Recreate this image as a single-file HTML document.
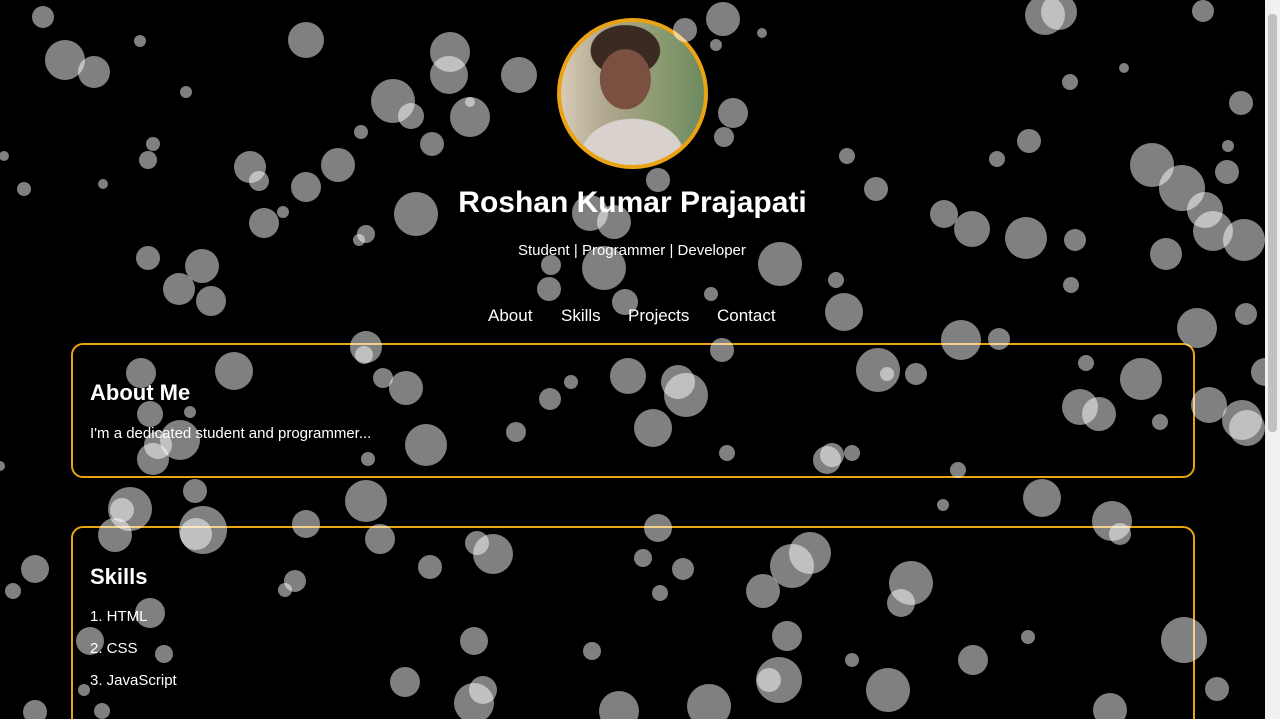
<!DOCTYPE html>
<html style="overflow:hidden;height:719px"><head><style>
body{margin:0;width:1280px;height:719px;overflow:hidden;background:#000;font-family:"Liberation Sans",sans-serif;color:#fff;position:relative}
.b{position:absolute;border-radius:50%;background:rgba(255,255,255,.5)}
.sb{position:absolute;right:0;top:0;width:15px;height:719px;background:#f1f1f1;z-index:5}
.sb i{position:absolute;left:3px;top:14px;width:9px;height:418px;background:#c1c1c1;border-radius:4px}
.av{position:absolute;left:557px;top:18px;width:143px;height:143px;border:4px solid #e9a314;border-radius:50%;background:radial-gradient(ellipse 22% 26% at 45% 40%,#7a5040 0 80%,transparent 82%),radial-gradient(ellipse 30% 22% at 45% 20%,#3a2a22 0 80%,transparent 82%),radial-gradient(ellipse 40% 30% at 50% 95%,#d9d2cc 0 90%,transparent 92%),linear-gradient(90deg,#d8cbb8,#b0a890 30%,#8a9a70 70%,#6f8a60);overflow:hidden}
.card{position:absolute;left:71px;width:1120px;border:2px solid #e9a314;border-radius:12px}
h1{position:absolute;top:186px;left:0;width:1265px;text-align:center;font-size:30px;margin:0;font-weight:bold}
.t{position:absolute;white-space:nowrap}
</style></head><body>
<div class="sb"><i></i></div>
<div class="av"></div>
<h1>Roshan Kumar Prajapati</h1>
<div class="t" style="left:518px;top:242px;font-size:15px">Student | Programmer | Developer</div>
<div class="t" style="left:488px;top:306px;font-size:17px">About</div>
<div class="t" style="left:561px;top:306px;font-size:17px">Skills</div>
<div class="t" style="left:628px;top:306px;font-size:17px">Projects</div>
<div class="t" style="left:717px;top:306px;font-size:17px">Contact</div>
<div class="card" style="top:343px;height:131px"></div>
<div class="t" style="left:90px;top:380px;font-size:22px;font-weight:bold">About Me</div>
<div class="t" style="left:90px;top:425px;font-size:15px">I'm a dedicated student and programmer...</div>
<div class="card" style="top:526px;height:220px"></div>
<div class="t" style="left:90px;top:564px;font-size:22px;font-weight:bold">Skills</div>
<div class="t" style="left:90px;top:608px;font-size:15px">1. HTML</div>
<div class="t" style="left:90px;top:640px;font-size:15px">2. CSS</div>
<div class="t" style="left:90px;top:672px;font-size:15px">3. JavaScript</div>
<div id="bb"></div>
<script>
var d=[[65,60,20],[94,72,16],[43,17,11],[140,41,6],[186,92,6],[306,40,18],[393,101,22],[411,116,13],[450,52,20],[449,75,19],[470,117,20],[519,75,18],[432,144,12],[361,132,7],[338,165,17],[306,187,15],[250,167,16],[259,181,10],[283,212,6],[264,223,15],[416,214,22],[366,234,9],[359,240,6],[148,160,9],[153,144,7],[103,184,5],[24,189,7],[4,156,5],[148,258,12],[202,266,17],[179,289,16],[211,301,15],[549,289,12],[551,265,10],[590,213,18],[614,222,17],[604,268,22],[625,302,13],[658,180,12],[685,30,12],[723,19,17],[733,113,15],[716,45,6],[762,33,5],[724,137,10],[780,264,22],[836,280,8],[844,312,19],[847,156,8],[876,189,12],[711,294,7],[722,350,12],[686,395,22],[678,382,17],[628,376,18],[653,428,19],[571,382,7],[550,399,11],[516,432,10],[470,102,5],[1045,15,20],[1059,12,18],[1070,82,8],[1124,68,5],[1203,11,11],[1241,103,12],[1227,172,12],[1228,146,6],[1152,165,22],[1182,188,23],[1205,210,18],[1213,231,20],[1244,240,21],[1166,254,16],[1075,240,11],[1026,238,21],[972,229,18],[944,214,14],[997,159,8],[1029,141,12],[1071,285,8],[1197,328,20],[1246,314,11],[961,340,20],[999,339,11],[878,370,22],[887,374,7],[916,374,11],[1086,363,8],[1141,379,21],[1080,407,18],[1099,414,17],[1160,422,8],[1209,405,18],[1242,420,20],[1247,428,18],[958,470,8],[943,505,6],[1042,498,19],[1112,521,20],[1120,534,11],[827,460,14],[852,453,8],[832,455,12],[727,453,8],[366,347,16],[364,355,9],[383,378,10],[406,388,17],[426,445,21],[368,459,7],[234,371,19],[141,373,15],[150,414,13],[180,440,20],[158,445,14],[153,459,16],[190,412,6],[130,509,22],[122,510,12],[195,491,12],[203,530,24],[196,534,16],[115,535,17],[306,524,14],[366,501,21],[380,539,15],[493,554,20],[477,543,12],[430,567,12],[658,528,14],[643,558,9],[683,569,11],[660,593,8],[792,566,22],[810,553,21],[763,591,17],[911,583,22],[901,603,14],[35,569,14],[13,591,8],[295,581,11],[285,590,7],[150,613,15],[90,641,14],[164,654,9],[474,641,14],[592,651,9],[787,636,15],[852,660,7],[973,660,15],[1028,637,7],[1184,640,23],[1217,689,12],[888,690,22],[779,680,23],[769,680,12],[709,706,22],[619,711,20],[474,703,20],[483,690,14],[405,682,15],[1110,710,17],[84,690,6],[102,711,8],[35,712,12],[0,466,5],[1265,372,14]];
var h='';d.forEach(function(a){h+='<div class="b" style="left:'+(a[0]-a[2])+'px;top:'+(a[1]-a[2])+'px;width:'+2*a[2]+'px;height:'+2*a[2]+'px"></div>'});
document.getElementById('bb').innerHTML=h;
</script>
</body></html>
